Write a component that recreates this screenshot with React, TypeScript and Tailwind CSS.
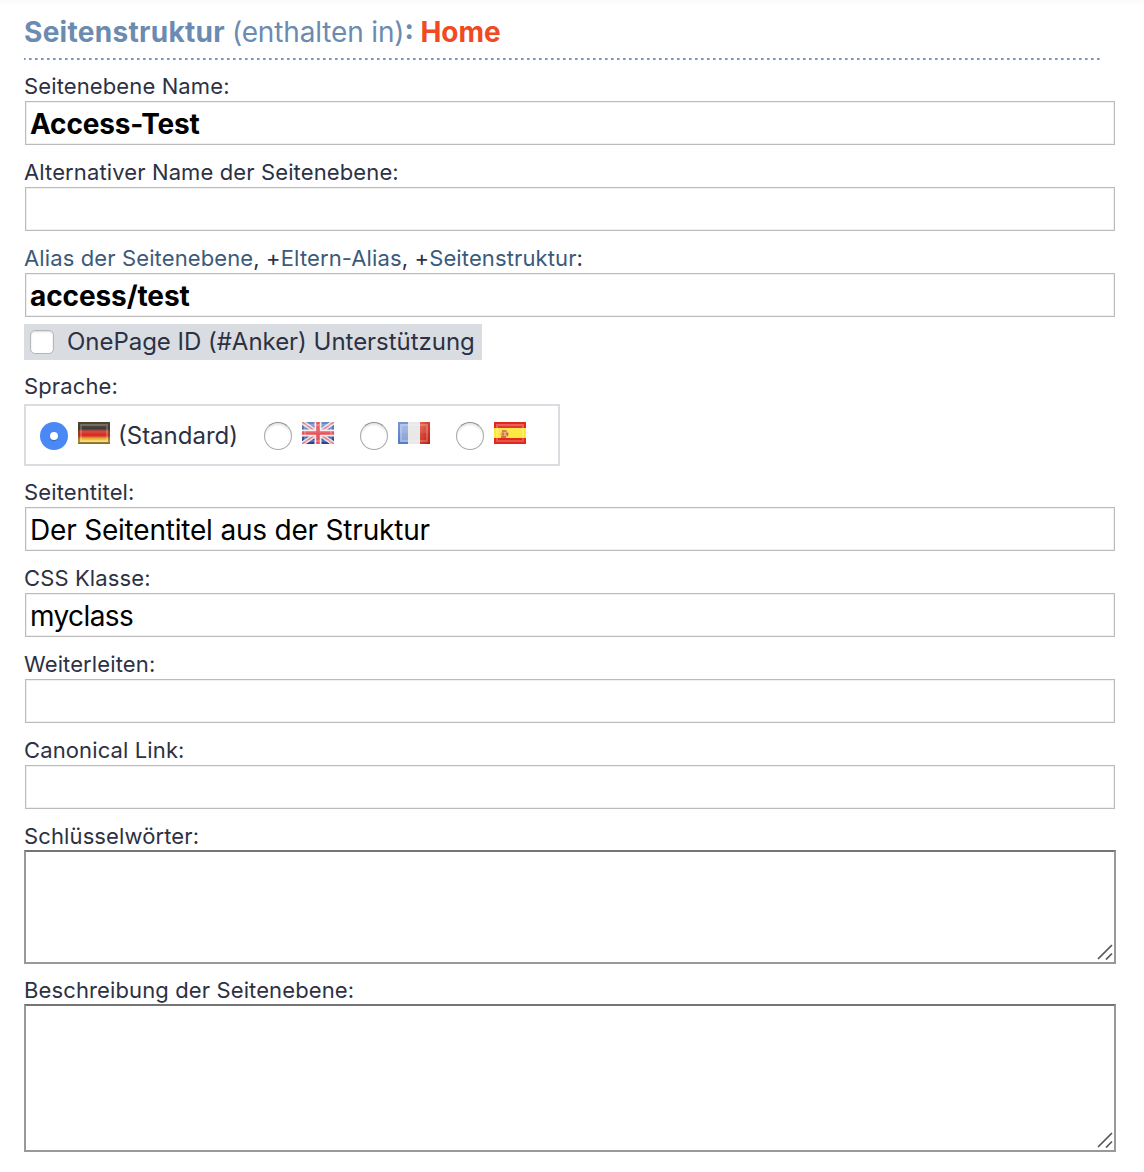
import React from 'react';

interface FieldProps {
  label: React.ReactNode;
  value?: string;
  inputClass?: string;
}

const Label: React.FC<{ children: React.ReactNode }> = ({ children }) => (
  <div className="h-7 leading-7 text-[22px] tracking-[0.12px] whitespace-nowrap">
    <span>{children}</span>
  </div>
);

const Field: React.FC<FieldProps> = ({ label, value = '', inputClass = 'tracking-[-0.2px]' }) => (
  <div className="mb-[13px]">
    <Label>{label}</Label>
    <input
      type="text"
      defaultValue={value}
      className={`block mt-px ml-px w-[1090px] h-11 pl-1 pt-px bg-white border border-[#bbbbbb] shadow-[inset_0_0_0_1px_#f0f0f0] text-[28px] text-black outline-none ${inputClass}`}
    />
  </div>
);

const Area: React.FC<{ label: string; areaClass: string }> = ({ label, areaClass }) => (
  <div className="mb-3">
    <Label>{label}</Label>
    <div className={`relative w-[1092px] bg-white border-2 border-[#999999] border-t-[#757575] ${areaClass}`}>
      <textarea className="block w-full h-full resize-none outline-none" />
      <svg className="absolute right-[1px] bottom-[2px]" width="16" height="16" viewBox="0 0 16 16" stroke="#555555" strokeWidth="1.7">
        <path d="M1 15L15 1M9 15.5L15 9.5" />
      </svg>
    </div>
  </div>
);

const Radio: React.FC<{ checked?: boolean }> = ({ checked }) =>
  checked ? (
    <span className="flex items-center justify-center size-7 rounded-full bg-[#4a88f6]">
      <span className="size-2 rounded-full bg-white shadow-[0_1px_1px_rgba(0,0,0,0.25)]" />
    </span>
  ) : (
    <span className="block size-7 rounded-full bg-white border border-[#a9a9a9] border-t-[#8e8e8e] shadow-[inset_0_2px_2px_rgba(0,0,0,0.1)]" />
  );

// Glossy inner frame shared by all flags
const Gloss = () => (
  <>
    <rect x="3" y="3" width="26" height="16" fill="none" stroke="#fff" strokeOpacity="0.2" strokeWidth="2" />
    <rect x="2" y="2" width="28" height="9" fill="#fff" fillOpacity="0.08" />
  </>
);

const flagClass = 'block w-8 h-[22px] mb-[7px]';

const FlagDe = () => (
  <svg className={flagClass} viewBox="0 0 32 22">
    <defs>
      <linearGradient id="de" x1="0" y1="0" x2="0" y2="1">
        <stop offset="0" stopColor="#4a4839" />
        <stop offset="0.3" stopColor="#2f2a26" />
        <stop offset="0.42" stopColor="#d23a30" />
        <stop offset="0.62" stopColor="#dc2a22" />
        <stop offset="0.74" stopColor="#e8a83c" />
        <stop offset="0.88" stopColor="#f3dc5c" />
        <stop offset="1" stopColor="#a5822c" />
      </linearGradient>
    </defs>
    <rect width="32" height="22" fill="url(#de)" />
    <rect x="1" y="1" width="30" height="20" fill="none" stroke="#5a4a20" strokeOpacity="0.5" strokeWidth="2" />
    <Gloss />
  </svg>
);

const FlagGb = () => (
  <svg className={flagClass} viewBox="0 0 32 22">
    <defs>
      <linearGradient id="gb" x1="0" y1="0" x2="0" y2="1">
        <stop offset="0" stopColor="#6c8bc9" />
        <stop offset="1" stopColor="#26408c" />
      </linearGradient>
    </defs>
    <rect width="32" height="22" fill="url(#gb)" />
    <path d="M0 0L32 22M32 0L0 22" stroke="#e6e6f2" strokeWidth="4.5" />
    <path d="M0 0L32 22M32 0L0 22" stroke="#e58084" strokeWidth="1.6" />
    <path d="M16 0V22M0 11H32" stroke="#f6ecee" strokeWidth="7" />
    <path d="M16 0V22M0 11H32" stroke="#e5565a" strokeWidth="3.6" />
    <Gloss />
  </svg>
);

const FlagFr = () => (
  <svg className={flagClass} viewBox="0 0 32 22">
    <defs>
      <linearGradient id="frBlue" x1="0" y1="0" x2="0" y2="1">
        <stop offset="0" stopColor="#7797d8" />
        <stop offset="1" stopColor="#557bc4" />
      </linearGradient>
      <linearGradient id="frRed" x1="0" y1="0" x2="1" y2="1">
        <stop offset="0" stopColor="#e8604e" />
        <stop offset="1" stopColor="#bd1d10" />
      </linearGradient>
    </defs>
    <rect width="10" height="22" fill="url(#frBlue)" />
    <rect x="2" y="2" width="8" height="18" fill="#fff" fillOpacity="0.3" />
    <rect x="10" width="12" height="22" fill="#e8e8e8" />
    <rect x="22" width="10" height="22" fill="url(#frRed)" />
    <Gloss />
  </svg>
);

const FlagEs = () => (
  <svg className={flagClass} viewBox="0 0 32 22">
    <rect width="32" height="22" fill="#e0281e" />
    <rect y="6" width="32" height="10" fill="#fbe83a" />
    <ellipse cx="10.5" cy="12" rx="4" ry="3.5" fill="#e3b06a" />
    <path d="M8 9h4.500M9 10.500v3M12 11.500h1.500v2M7 15h5" stroke="#cc5a48" strokeWidth="1.400" fill="none" />
    <Gloss />
  </svg>
);

const App: React.FC = () => {
  return (
    <div className="w-[1144px] h-[1172px] overflow-hidden bg-linear-to-b from-[#f8f9fb] to-white to-[6px] pl-6 text-[#2c3144] font-['Inter','Liberation_Sans',sans-serif]">
      {/* Title */}
      <h1 className="w-[1076px] h-[58px] pt-[14px] leading-9 text-[28px] font-bold text-[#6b8bb0] whitespace-nowrap">
        <span>
          <span className="tracking-[0.3px]">Seitenstruktur </span>
          <span className="font-normal tracking-[-0.15px]">(enthalten in)</span>: <span className="text-[#f04923]">Home</span>
        </span>
      </h1>
      <svg className="block mb-3" width="1076" height="2">
        <path d="M0 1H1076" stroke="#7b96ba" strokeWidth="2" strokeDasharray="2.6 3.4" strokeDashoffset="1" />
      </svg>

      <Field label="Seitenebene Name:" value="Access-Test" inputClass="font-bold tracking-[-0.15px]" />
      <Field label="Alternativer Name der Seitenebene:" />
      <Field
        label={
          <>
            <a className="text-[#3c5a7a]">Alias der Seitenebene</a>, +<a className="text-[#3c5a7a]">Eltern-Alias</a>, +
            <a className="text-[#3c5a7a]">Seitenstruktur</a>:
          </>
        }
        value="access/test"
        inputClass="font-bold tracking-[-0.1px]"
      />

      {/* Anchor support */}
      <label className="flex items-center w-[458px] h-9 -mt-1.5 mb-3 pl-1.5 bg-[#d9dce1] text-[24px] tracking-[-0.03px] whitespace-nowrap">
        <span className="size-6 mr-[13px] rounded-[5px] bg-white border border-[#b5b5b5] shadow-[inset_0_1px_2px_rgba(0,0,0,0.15)]" />
        <span>OnePage ID (#Anker) Unterstützung</span>
      </label>

      {/* Language */}
      <Label>Sprache:</Label>
      <div className="flex items-center w-[536px] h-[62px] mt-1 mb-3 pl-[14px] pt-0.5 border-2 border-[#d9dce1] bg-white text-[24px]">
        <Radio checked />
        <span className="ml-2.5"><FlagDe /></span>
        <span className="ml-2 w-[120px] mr-[26px] whitespace-nowrap">(Standard)</span>
        <Radio />
        <span className="ml-2.5 mr-[26px]"><FlagGb /></span>
        <Radio />
        <span className="ml-2.5 mr-[26px]"><FlagFr /></span>
        <Radio />
        <span className="ml-2.5"><FlagEs /></span>
      </div>

      <Field label="Seitentitel:" value="Der Seitentitel aus der Struktur" />
      <Field label="CSS Klasse:" value="myclass" inputClass="tracking-[-0.6px]" />
      <Field label="Weiterleiten:" />
      <Field label="Canonical Link:" />
      <Area label="Schlüsselwörter:" areaClass="h-[114px]" />
      <Area label="Beschreibung der Seitenebene:" areaClass="h-[148px]" />
    </div>
  );
};

export default App;
